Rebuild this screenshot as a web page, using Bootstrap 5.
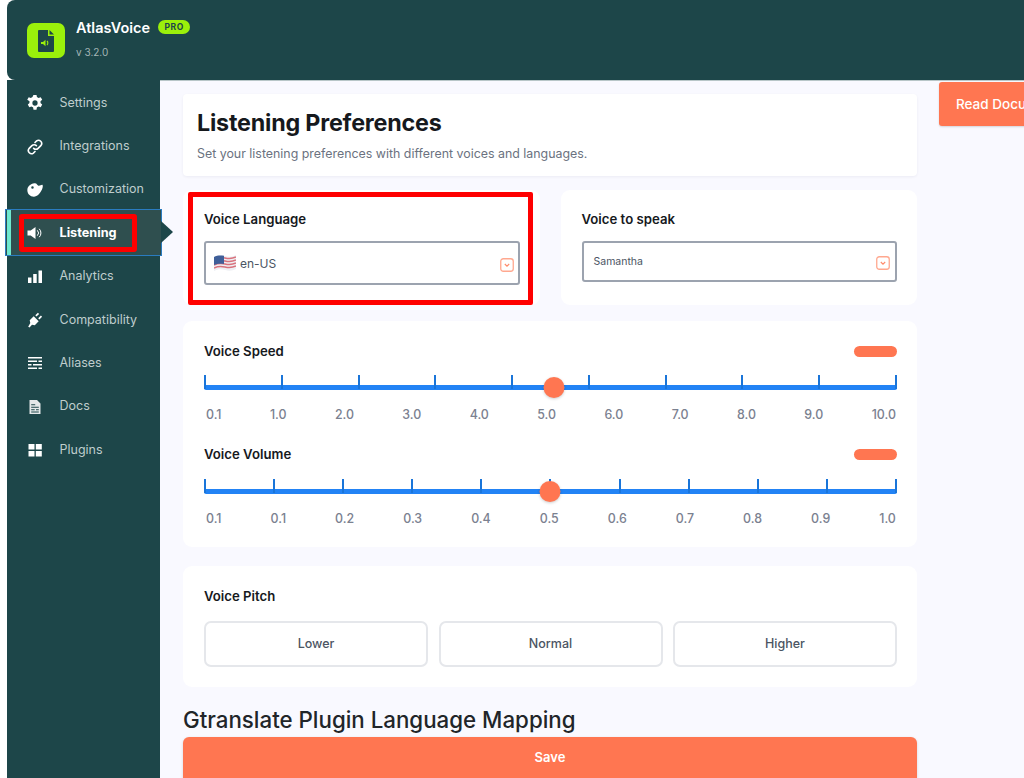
<!doctype html>
<html lang="en">
<head>
<meta charset="utf-8">
<title>AtlasVoice</title>
<link href="https://cdn.jsdelivr.net/npm/bootstrap@5.3.0/dist/css/bootstrap.min.css" rel="stylesheet">
<style>
html,body{height:778px;overflow:hidden;background:#fff;font-family:"Inter",sans-serif;}
.av-app{height:778px;width:1024px;overflow:hidden;}
.av-top{height:80px;margin-left:7px;background:#1d4649;border-radius:8px 0 0 8px;padding:20px 0 0 20px;gap:11px;}
.av-logo{width:38px;height:35px;margin-top:3px;background:#9bf00b;border-radius:7px;}
.av-brand{font-size:14.5px;font-weight:600;color:#fff;line-height:16px;margin-top:0;}
.av-pro{width:32px;height:14px;border-radius:7px;background:#9bf00b;color:#1d4649;font-size:8.5px;font-weight:700;letter-spacing:.5px;margin-left:8px;margin-top:0;}
.av-ver{font-size:10px;color:#a3b5b6;margin-top:9px;line-height:14px;}
.av-body{height:698px;}
.av-side{width:153px;margin-left:7px;background:#1d4649;padding-top:1.5px;flex:none;}
.av-item{height:43.35px;color:#bfcdcd;font-size:12.5px;padding-left:19.5px;gap:17px;position:relative;}
.av-item svg{width:16px;height:16px;flex:none;fill:#fff;}
.av-item.av-active{color:#fff;font-weight:700;font-size:12.7px;background:#2f4f4f;box-shadow:0 0 0 1px #2a7cc0;margin:-1.5px 0 -.15px -1px;height:45px;width:155px;padding-left:20.5px;z-index:2;}
.av-item.av-active::before{content:"";position:absolute;left:1px;top:0;bottom:0;width:3.5px;background:#6fe8cf;}
.av-item.av-active::after{content:"";position:absolute;right:-12px;top:11px;border-left:12px solid #1d4649;border-top:11px solid transparent;border-bottom:11px solid transparent;}
.av-redbar{position:absolute;left:13px;top:4px;width:118px;height:38px;border:5px solid #f00;border-radius:3px;}
.av-main{flex:1;background:#f9f9ff;padding:1px 0 0 23px;gap:22px;min-width:0;border-top:1px solid #b8c6c8;overflow:hidden;}
.av-col{width:734px;flex:none;padding-top:12px;}
.av-read{width:150px;height:44px;background:#ff7651;color:#fff;border-radius:3px;font-size:13.5px;font-weight:500;padding:0 17px;line-height:44px;white-space:nowrap;flex:none;box-shadow:0 1px 2px rgba(0,0,0,.15);}
.av-panel{background:#fff;border-radius:9px;}
.av-head{height:82px;border-radius:4px;padding:14px;box-shadow:0 1px 3px rgba(20,20,60,.06);margin-bottom:14px;}
.av-head h1{font-size:23.3px;font-weight:700;color:#16191d;line-height:30px;margin:0 0 7px;letter-spacing:-.2px;}
.av-head p{font-size:12.4px;color:#6b7280;margin:0;line-height:18px;}
.av-pair{--bs-gutter-x:21px;}
.av-sel-card{height:115px;padding:20px 20px 0 21px;position:relative;}
.av-label{font-size:13.2px;font-weight:600;color:#16191d;line-height:18px;}
.av-select{border:2px solid #9ca3af;border-radius:3px;margin-top:13px;background:#fff;padding:1px 11px 0 8px;color:#4b5563;}
.av-sel1{height:44px;font-size:12px;gap:4px;}
.av-sel2{height:41px;font-size:10.5px;padding-left:10px;}
.av-chev{width:14px;height:14px;flex:none;margin-left:auto;margin-right:-6px;}
.av-sel1 .av-chev{margin-right:-7px;margin-top:3px;}
.av-sel2 .av-chev{margin-top:1px;}
.av-redbox{position:absolute;left:5px;top:2px;width:345px;height:113px;border:5px solid #f00;border-radius:2px;}
.av-sliders{height:226px;margin-top:16px;padding:21px 20px 0 21px;}
.av-pill{width:43px;height:11px;border-radius:6px;background:#ff7651;}
.av-rule{position:relative;height:15px;margin-top:15px;border-bottom:5px solid #2283f5;border-radius:0 0 2px 2px;}
.av-rule2{margin-top:16px;}
.av-tick{width:2px;height:14px;background:#1a75d9;}
.av-knob{position:absolute;top:2px;width:21px;height:21px;border-radius:50%;background:#ff7651;box-shadow:0 1px 3px rgba(0,0,0,.2);transform:translateX(-50%);}
.av-nums{font-size:12.4px;font-weight:500;color:#7b8190;padding:0 1px 0 2px;margin-top:17px;line-height:16px;}
.av-sec2{margin-top:22px;}
.av-pitch{height:121px;margin-top:19px;padding:21px 20px 0 21px;}
.av-pitch .av-label{margin-bottom:16px;}
.av-opt{height:46px;border:2px solid #e5e7eb;border-radius:7px;color:#4b5563;font-size:12.5px;font-weight:500;background:#fff;width:224px;}
.av-h2{font-size:22.3px;font-weight:500;color:#212529;line-height:28px;margin:19px 0 3px;white-space:nowrap;}
.av-save{height:46px;background:#ff7651;color:#fff;font-size:13px;font-weight:600;border-radius:6px;box-shadow:0 1px 3px rgba(0,0,0,.15);}
</style>
</head>
<body>
<div class="av-app d-flex flex-column">
  <header class="av-top d-flex align-items-start flex-none">
    <div class="av-logo d-flex align-items-center justify-content-center">
      <svg width="16" height="22" viewBox="0 0 16 22"><path fill="#1d4649" d="M1 0h9v6h6v15a1 1 0 0 1-1 1H1a1 1 0 0 1-1-1V1a1 1 0 0 1 1-1zM11.500 0 16 4.500h-4.500z"/><path fill="#9bf00b" d="M3 12h2l2.500-2.200v6.400L5 14H3z"/><path fill="none" stroke="#9bf00b" stroke-width="1.100" d="M9 11a2.800 2.800 0 0 1 0 4"/></svg>
    </div>
    <div>
      <div class="d-flex align-items-start"><div class="av-brand">AtlasVoice</div><div class="av-pro d-flex align-items-center justify-content-center">PRO</div></div>
      <div class="av-ver">v 3.2.0</div>
    </div>
  </header>
  <div class="av-body d-flex">
    <nav class="av-side">
      <div class="av-item d-flex align-items-center"><svg viewBox="1 1 14 14"><path fill-rule="evenodd" d="M6.700.8h2.600l.4 2a5 5 0 0 1 1.400.8l1.900-.7 1.300 2.300-1.500 1.300a5 5 0 0 1 0 1.600l1.500 1.300-1.300 2.300-1.900-.7a5 5 0 0 1-1.400.8l-.4 2H6.700l-.4-2a5 5 0 0 1-1.400-.8l-1.900.7-1.300-2.300 1.500-1.300a5 5 0 0 1 0-1.600L1.200 5.200l1.300-2.300 1.900.7a5 5 0 0 1 1.400-.8zM8 5.700a2.300 2.300 0 1 0 0 4.600 2.300 2.300 0 0 0 0-4.600z"/></svg><span>Settings</span></div>
      <div class="av-item d-flex align-items-center"><svg viewBox="1 1 14 14"><g fill="none" stroke="#fff" stroke-width="1.400" stroke-linecap="round"><path d="M6.800 9.200a2.700 2.700 0 0 0 3.900 0l2.600-2.600a2.800 2.800 0 0 0-3.900-3.900L8 4.100"/><path d="M9.200 6.800a2.700 2.700 0 0 0-3.900 0L2.700 9.400a2.800 2.800 0 0 0 3.900 3.900L8 11.900"/></g></svg><span>Integrations</span></div>
      <div class="av-item d-flex align-items-center"><svg viewBox="1 1 14 14"><path fill-rule="evenodd" d="M7.500 2.200c2.300-.3 2 1.700 3.500 2 1.500.3 3-1.200 3.600-.5.600 1-.1 3.300-1.100 5C12.300 11 10 13.800 7 13.800 3.700 13.800 1.300 11.400 1.300 8.200 1.300 5 4 2.600 7.500 2.200zM5.800 4.800a1.100 1.100 0 1 0 0 2.200 1.100 1.100 0 0 0 0-2.200z"/></svg><span>Customization</span></div>
      <div class="av-item av-active d-flex align-items-center"><svg viewBox="0 0 16 16"><path d="M.5 5.500h3.200L8.500 2v12L3.700 10.500H.5z"/><path fill="none" stroke="#fff" stroke-width="1" d="M10.300 5.300a3.800 3.800 0 0 1 0 5.400M12.200 3.800a6 6 0 0 1 0 8.400"/></svg><span>Listening</span><div class="av-redbar"></div></div>
      <div class="av-item d-flex align-items-center"><svg viewBox="0 0 16 16"><path d="M1 8.500h3.500V14H1zM6.200 5h3.500v9H6.200zM11.500 1.500H15V14h-3.500z"/></svg><span>Analytics</span></div>
      <div class="av-item d-flex align-items-center"><svg viewBox="0 0 16 16"><path d="M1.200 14.800 3.300 11 2.700 8.300l4-4 5 5-3.900 3.900-2.800-.4-2.500 2.600zM8.300 3.300l2.600-2.500 1.200 1.100-2.600 2.600zM11.200 6.300l2.700-2.700 1.200 1.200-2.700 2.700z"/></svg><span>Compatibility</span></div>
      <div class="av-item d-flex align-items-center"><svg viewBox="0 0 16 16"><path d="M1 2h14v1.500H1zM1 5.500h9V7H1zM11.500 5.500H15V7h-3.500zM1 9h3.500v1.500H1zM6 9h9v1.500H6zM1 12.500h9V14H1zM11.500 12.500H15V14h-3.500z"/></svg><span>Aliases</span></div>
      <div class="av-item d-flex align-items-center"><svg viewBox="0 0 16 16"><path fill-rule="evenodd" fill-opacity=".88" d="M2.500 1H10l3.500 3.500V15h-11zM4.200 5.200v1h4v-1zM4.200 7.700v1h7.600v-1zM4.200 10.200v1h3.500v-1zM9 10.200v1h2.800v-1zM4.200 12.500v1h7.600v-1z"/></svg><span>Docs</span></div>
      <div class="av-item d-flex align-items-center"><svg viewBox="0 0 16 16"><path d="M1.500 2h6v5.500h-6zM8.800 2h6v5.500h-6zM1.500 9h6v5.500h-6zM8.800 9h6v5.500h-6z"/></svg><span>Plugins</span></div>
    </nav>
    <main class="av-main d-flex align-items-start">
      <div class="av-col">
        <section class="av-panel av-head">
          <h1>Listening Preferences</h1>
          <p>Set your listening preferences with different voices and languages.</p>
        </section>
        <div class="row av-pair">
          <div class="col-6">
            <section class="av-panel av-sel-card">
              <div class="av-label">Voice Language</div>
              <div class="av-select av-sel1 d-flex align-items-center">
                <svg width="22" height="19" viewBox="0 0 22 19"><path d="M0 3c4-2 7-2 11-1s7 1 11-1v14c-4 2-7 2-11 1s-7-1-11 1z" fill="#eef0f4"/><path d="M0 5c4-2 7-2 11-1s7 1 11-1M0 8c4-2 7-2 11-1s7 1 11-1M0 11c4-2 7-2 11-1s7 1 11-1M0 14c4-2 7-2 11-1s7 1 11-1" fill="none" stroke="#d9727d" stroke-width="1.500"/><path d="M0 3c3-1.600 6-1.800 10-1.200V10C6 9.500 3 9.800 0 11z" fill="#3f5f99"/></svg>
                <span>en-US</span>
                <svg class="av-chev" viewBox="0 0 14 14"><rect x=".75" y=".75" width="12.500" height="12.500" rx="2.500" fill="#fff" stroke="#ffa88f" stroke-width="1.300"/><path d="M4.800 6 7 8.200 9.200 6" fill="none" stroke="#ff8a6a" stroke-width="1.100"/></svg>
              </div>
              <div class="av-redbox"></div>
            </section>
          </div>
          <div class="col-6">
            <section class="av-panel av-sel-card">
              <div class="av-label">Voice to speak</div>
              <div class="av-select av-sel2 d-flex align-items-center">
                <span>Samantha</span>
                <svg class="av-chev" viewBox="0 0 14 14"><rect x=".75" y=".75" width="12.500" height="12.500" rx="2.500" fill="#fff" stroke="#ffa88f" stroke-width="1.300"/><path d="M4.800 6 7 8.200 9.200 6" fill="none" stroke="#ff8a6a" stroke-width="1.100"/></svg>
              </div>
            </section>
          </div>
        </div>
        <section class="av-panel av-sliders">
          <div class="d-flex justify-content-between align-items-center"><div class="av-label">Voice Speed</div><div class="av-pill"></div></div>
          <div class="av-rule d-flex justify-content-between">
            <i class="av-tick"></i><i class="av-tick"></i><i class="av-tick"></i><i class="av-tick"></i><i class="av-tick"></i><i class="av-tick"></i><i class="av-tick"></i><i class="av-tick"></i><i class="av-tick"></i><i class="av-tick"></i>
            <div class="av-knob" style="left:50.5%"></div>
          </div>
          <div class="av-nums d-flex justify-content-between"><span>0.1</span><span>1.0</span><span>2.0</span><span>3.0</span><span>4.0</span><span>5.0</span><span>6.0</span><span>7.0</span><span>8.0</span><span>9.0</span><span>10.0</span></div>
          <div class="av-sec2 d-flex justify-content-between align-items-center"><div class="av-label">Voice Volume</div><div class="av-pill"></div></div>
          <div class="av-rule av-rule2 d-flex justify-content-between">
            <i class="av-tick"></i><i class="av-tick"></i><i class="av-tick"></i><i class="av-tick"></i><i class="av-tick"></i><i class="av-tick"></i><i class="av-tick"></i><i class="av-tick"></i><i class="av-tick"></i><i class="av-tick"></i><i class="av-tick"></i>
            <div class="av-knob" style="left:49.9%"></div>
          </div>
          <div class="av-nums d-flex justify-content-between"><span>0.1</span><span>0.1</span><span>0.2</span><span>0.3</span><span>0.4</span><span>0.5</span><span>0.6</span><span>0.7</span><span>0.8</span><span>0.9</span><span>1.0</span></div>
        </section>
        <section class="av-panel av-pitch">
          <div class="av-label">Voice Pitch</div>
          <div class="d-flex justify-content-between">
            <div class="av-opt d-flex align-items-center justify-content-center">Lower</div>
            <div class="av-opt d-flex align-items-center justify-content-center">Normal</div>
            <div class="av-opt d-flex align-items-center justify-content-center">Higher</div>
          </div>
        </section>
        <h2 class="av-h2">Gtranslate Plugin Language Mapping</h2>
        <div class="av-save d-flex align-items-center justify-content-center pb-1">Save</div>
      </div>
      <div class="av-read">Read Documentation</div>
    </main>
  </div>
</div>
<script src="https://cdn.jsdelivr.net/npm/bootstrap@5.3.0/dist/js/bootstrap.bundle.min.js"></script>
</body>
</html>
